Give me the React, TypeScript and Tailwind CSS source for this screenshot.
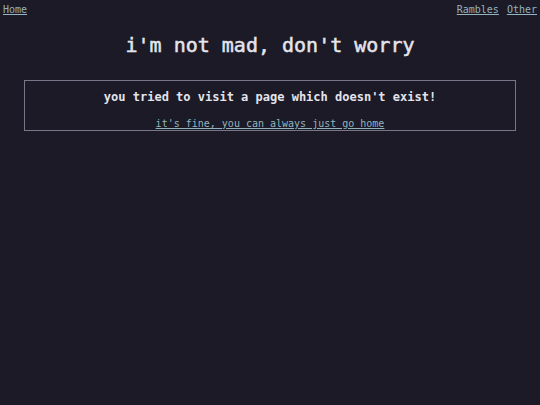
export default function App() {
  return (
    <div
      className="min-h-screen bg-[#1b1a26] text-[#e4e4ec]"
      style={{ fontFamily: '"DejaVu Sans Mono", "Liberation Mono", monospace' }}
    >
      {/* Nav */}
      <nav className="flex justify-between px-[3px] pt-[3px] text-[10px] leading-[14px]">
        <a href="#" className="text-[#93b4bf] underline">Home</a>
        <div className="flex gap-[8px]">
          <a href="#" className="text-[#93b4bf] underline">Rambles</a>
          <a href="#" className="text-[#93b4bf] underline">Other</a>
        </div>
      </nav>

      <h1 className="mt-[14px] text-center text-[20px] leading-[28px] font-normal [-webkit-text-stroke:0.5px_currentColor]">
        i'm not mad, don't worry
      </h1>

      <section className="mx-[24px] mt-[21px] h-[51px] border border-[#77778a] text-center">
        <p className="mt-[8px] text-[12px] leading-[16px] font-bold">
          you tried to visit a page which doesn't exist!
        </p>
        <a href="#" className="mt-[13px] inline-block text-[10px] leading-[12px] text-[#93b4bf] underline">
          it's fine, you can always just go home
        </a>
      </section>
    </div>
  )
}
